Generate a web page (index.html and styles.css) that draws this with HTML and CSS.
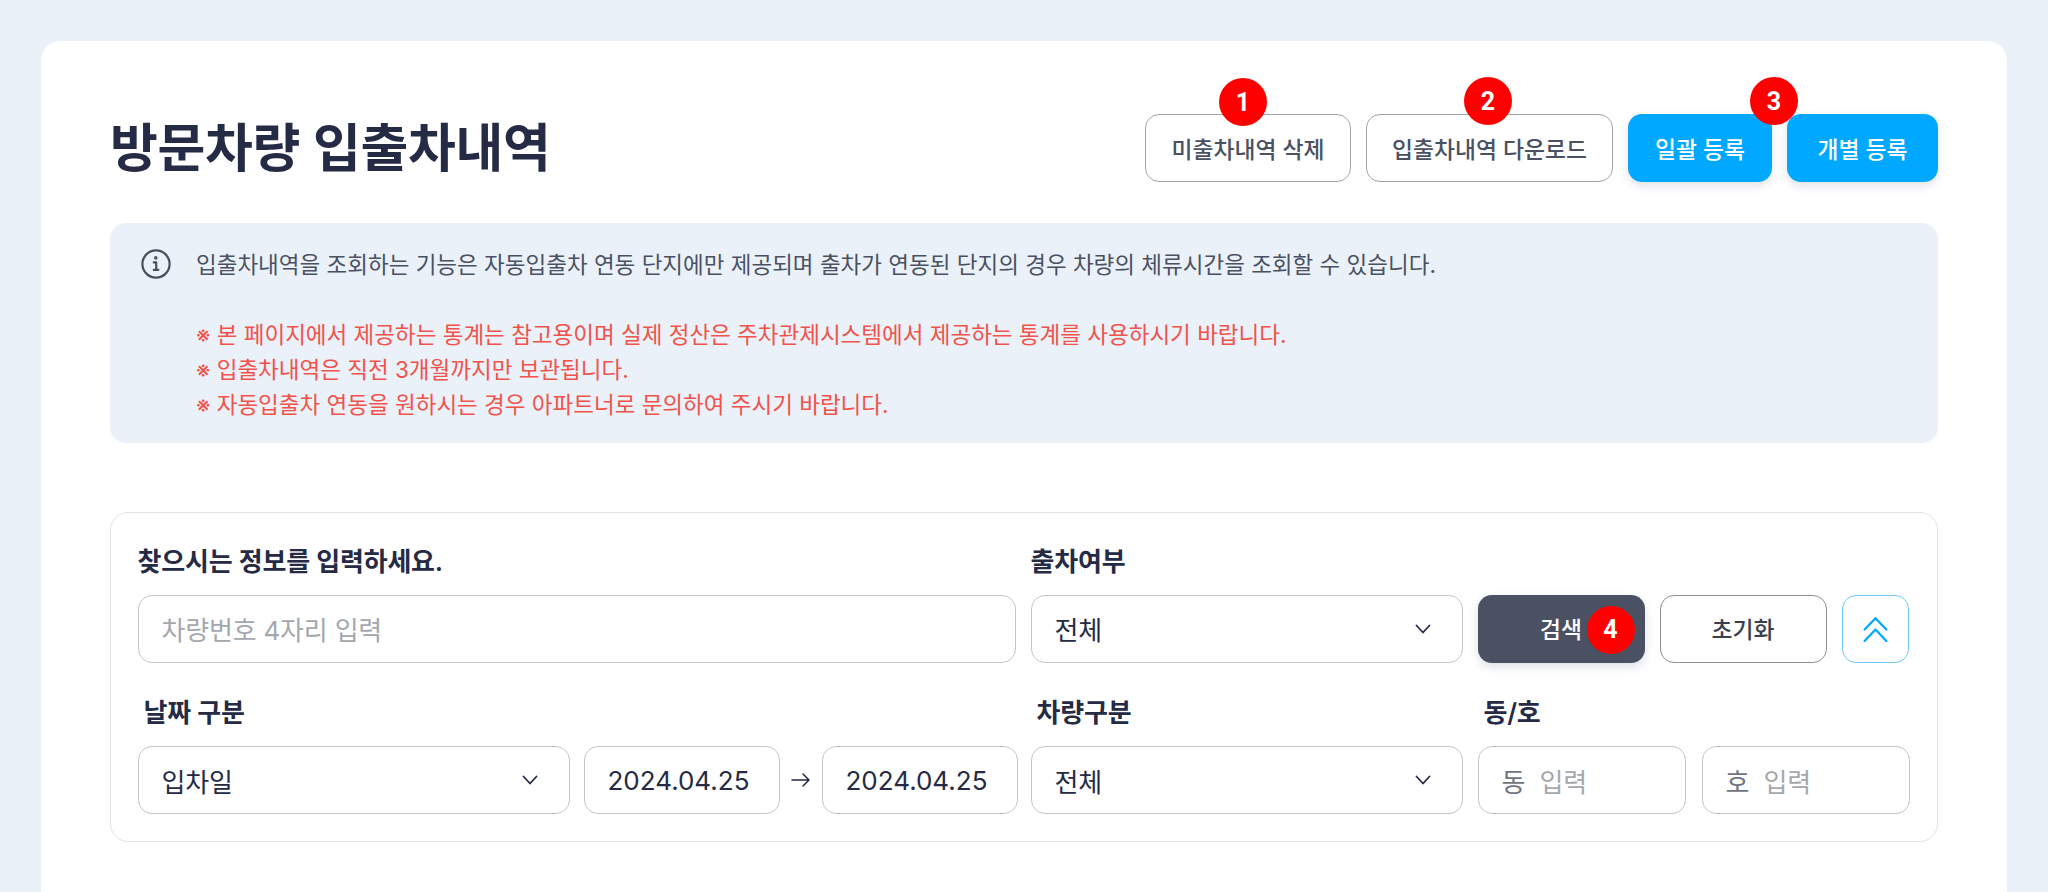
FILE: index.html
```html
<!DOCTYPE html>
<html lang="ko">
<head>
<meta charset="utf-8">
<title>방문차량 입출차내역</title>
<link rel="stylesheet" href="styles.css">
</head>
<body>
<main class="card">
  <header class="head">
    <h1 class="title">방문차량 입출차내역</h1>
    <div class="actions">
      <button class="btn btn-line btn-del">미출차내역 삭제<span class="badge badge-1">1</span></button>
      <button class="btn btn-line btn-down">입출차내역 다운로드</button>
      <button class="btn btn-blue btn-bulk">일괄 등록</button>
      <button class="btn btn-blue btn-each">개별 등록</button>
      <span class="badge badge-2">2</span>
      <span class="badge badge-3">3</span>
    </div>
  </header>

  <section class="notice">
    <svg class="info-icon" viewBox="0 0 30 30" fill="none" stroke="#4a4f5c" stroke-width="2.2" stroke-linecap="round" stroke-linejoin="round"><circle cx="15" cy="15" r="13.6"/><path d="M12.8 13.4h2.4v7.2M12.8 20.8h4.6"/><circle cx="14.8" cy="8.9" r="0.7"/></svg>
    <div class="notice-text">
      <p class="notice-main">입출차내역을 조회하는 기능은 자동입출차 연동 단지에만 제공되며 출차가 연동된 단지의 경우 차량의 체류시간을 조회할 수 있습니다.</p>
      <p class="notice-red">※ 본 페이지에서 제공하는 통계는 참고용이며 실제 정산은 주차관제시스템에서 제공하는 통계를 사용하시기 바랍니다.</p>
      <p class="notice-red">※ 입출차내역은 직전 3개월까지만 보관됩니다.</p>
      <p class="notice-red">※ 자동입출차 연동을 원하시는 경우 아파트너로 문의하여 주시기 바랍니다.</p>
    </div>
  </section>

  <section class="search">
    <div class="row row-top">
      <div class="field">
        <div class="label">찾으시는 정보를 입력하세요.</div>
        <div class="control placeholder">차량번호 4자리 입력</div>
      </div>
      <div class="field">
        <div class="label">출차여부</div>
        <div class="control select">전체<svg class="caret" viewBox="0 0 16 10" fill="none" stroke="#252a45" stroke-width="1.8" stroke-linecap="round" stroke-linejoin="round"><path d="M1.5 1.5 8 8.5l6.5-7"/></svg></div>
      </div>
      <div class="field field-actions">
        <button class="btn btn-dark">검색<span class="badge badge-4">4</span></button>
        <button class="btn btn-reset">초기화</button>
        <button class="btn btn-toggle" aria-label="접기"><svg viewBox="0 0 24 24" fill="none" stroke="#00a8ff" stroke-width="2.1" stroke-linecap="round" stroke-linejoin="round"><path d="M2 12.5 12 2l10 10.5M2 23l10-10.500 10 10.500"/></svg></button>
      </div>
    </div>
    <div class="row row-bottom">
      <div class="field">
        <div class="label label-in">날짜 구분</div>
        <div class="date-line">
          <div class="control select date-type">입차일<svg class="caret" viewBox="0 0 16 10" fill="none" stroke="#252a45" stroke-width="1.8" stroke-linecap="round" stroke-linejoin="round"><path d="M1.5 1.5 8 8.5l6.5-7"/></svg></div>
          <div class="control date">2024.04.25</div>
          <svg class="arrow" viewBox="0 0 20 16" fill="none" stroke="#252a45" stroke-width="1.5" stroke-linecap="round" stroke-linejoin="round"><path d="M1 8h17M12 2l6 6-6 6"/></svg>
          <div class="control date">2024.04.25</div>
        </div>
      </div>
      <div class="field">
        <div class="label label-in">차량구분</div>
        <div class="control select">전체<svg class="caret" viewBox="0 0 16 10" fill="none" stroke="#252a45" stroke-width="1.8" stroke-linecap="round" stroke-linejoin="round"><path d="M1.5 1.5 8 8.5l6.5-7"/></svg></div>
      </div>
      <div class="field">
        <div class="label label-in">동/호</div>
        <div class="pair">
          <div class="control placeholder"><span class="ph-dark">동</span>&nbsp; 입력</div>
          <div class="control placeholder"><span class="ph-dark">호</span>&nbsp; 입력</div>
        </div>
      </div>
    </div>
  </section>
</main>
</body>
</html>
```
FILE: styles.css
```css
* { box-sizing: border-box; }
html, body { margin: 0; height: 892px; overflow: hidden; }
body {
  background: #eaf1f9;
  padding: 41px 41px 0;
  font-family: Inter, "Noto Sans CJK KR", sans-serif;
  color: #252a45;
}
p { margin: 0; }
button { font-family: inherit; cursor: pointer; }

.card {
  background: #fff;
  border-radius: 20px 20px 0 0;
  padding: 73px 69px 0;
  height: 851px;
  overflow: hidden;
}
.head { display: flex; justify-content: space-between; align-items: center; height: 68px; }
.title { margin: 2px 0 0; font-size: 52px; font-weight: 600; line-height: 68px; letter-spacing: -0.3px; color: #252a45; }
.actions { display: flex; position: relative; gap: 15px; }

.btn {
  position: relative;
  height: 68px;
  border-radius: 14px;
  padding: 0;
  font-size: 22.8px;
  font-weight: 500;
}
.btn-line { background: #fff; border: 1.5px solid #a3a4a9; color: #4a5162; }
.btn-del { width: 206px; }
.btn-down { width: 247px; }
.btn-blue { background: #00a8ff; border: 0; color: #fff; box-shadow: 0 4px 10px rgba(40, 60, 100, .14); }
.btn-bulk { width: 144px; }
.btn-each { width: 151px; }

.badge {
  position: absolute;
  width: 48px;
  height: 48px;
  border-radius: 50%;
  background: #ff0000;
  color: #fff;
  display: flex;
  align-items: center;
  justify-content: center;
  font-size: 25px;
  font-weight: 700;
  font-family: Roboto, sans-serif;
}
.badge-1 { left: 73px; top: -37px; }
.badge-2 { left: 319px; top: -37px; }
.badge-3 { left: 605px; top: -37px; }
.badge-4 { left: 109px; top: 11px; }

.notice {
  display: flex;
  gap: 25px;
  margin-top: 41px;
  height: 220px;
  padding: 24px 27px 0 31px;
  background: #eaf1f9;
  border-radius: 16px;
}
.info-icon { width: 30px; height: 30px; flex: none; margin-top: 2px; }
.notice-text { font-size: 22.5px; line-height: 35px; }
.notice-main { color: #4a5162; margin-bottom: 35px; }
.notice-red { color: #f2524a; }

.search {
  margin-top: 69px;
  height: 330px;
  padding: 30.5px 26.5px 0;
  border: 1.5px solid #e0e2e6;
  border-radius: 18px;
}
.row { display: grid; grid-template-columns: 878px 432px 432px; column-gap: 15px; }
.row-bottom { margin-top: 32.5px; }
.row-top .field-actions { display: flex; gap: 15px; align-items: flex-end; }
.label { font-size: 26px; font-weight: 600; line-height: 36px; margin-bottom: 15px; letter-spacing: -0.2px; color: #252a45; }
.label-in { padding-left: 6px; }

.control {
  height: 68px;
  border: 1.5px solid #c4c6cb;
  border-radius: 14px;
  display: flex;
  align-items: center;
  padding: 0 23px;
  font-size: 26px;
  letter-spacing: -0.2px;
  color: #252a45;
  background: #fff;
}
.select { justify-content: space-between; }
.caret { width: 16px; height: 10px; margin-right: 8px; }
.placeholder { color: #a4a7ae; }
.ph-dark { color: #6f7480; }

.date-line { display: flex; align-items: center; }
.date-type { width: 432px; flex: none; margin-right: 14px; }
.date { width: 196px; flex: none; justify-content: flex-start; padding: 0 0 0 23px; letter-spacing: 0; }
.arrow { width: 20px; height: 16px; margin: 0 11px 0 11px; flex: none; }
.pair { display: flex; gap: 16px; }
.pair .control { flex: 1; }

.btn-dark { width: 167px; background: #4a5162; border: 0; color: #fff; box-shadow: 0 4px 10px rgba(40, 60, 100, .16); }
.btn-reset { width: 167px; background: #fff; border: 1.5px solid #8d8f95; color: #3a3f4e; }
.btn-toggle { width: 67px; background: #fff; border: 1.5px solid #6fc8f5; display: flex; align-items: center; justify-content: center; }
.btn-toggle svg { width: 27px; height: 26px; }
```
